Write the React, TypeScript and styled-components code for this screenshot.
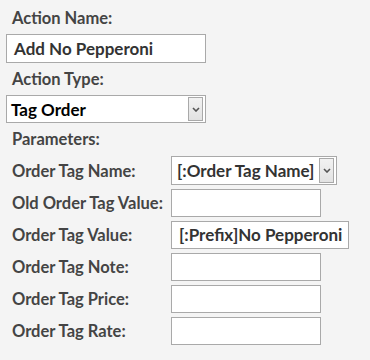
import { createGlobalStyle, styled } from 'styled-components';

const GlobalStyle = createGlobalStyle`
  body {
    margin: 0;
    background: #f4f4f4;
    font-family: Lato, 'Open Sans', sans-serif;
  }
`;

const params = [
  { name: 'Order Tag Name:', kind: 'select', value: '[:Order Tag Name]' },
  { name: 'Old Order Tag Value:', kind: 'input', value: '' },
  { name: 'Order Tag Value:', kind: 'wide', value: '[:Prefix]No Pepperoni' },
  { name: 'Order Tag Note:', kind: 'input', value: '' },
  { name: 'Order Tag Price:', kind: 'input', value: '' },
  { name: 'Order Tag Rate:', kind: 'input', value: '' }
];

export default function App() {
  return (
    <StyledPage>
      <GlobalStyle />
      <StyledLabel>Action Name:</StyledLabel>
      <StyledInput $width={200} $height={29}>Add No Pepperoni</StyledInput>
      <StyledLabel>Action Type:</StyledLabel>
      <Select width={200} height={28} value="Tag Order" dark />
      <StyledLabel $gap={7}>Parameters:</StyledLabel>
      <StyledGrid>
        {params.map(({ name, kind, value }) => (
          <StyledRow key={name}>
            <StyledRowLabel>{name}</StyledRowLabel>
            {kind === 'select' && <Select width={166} height={29} value={value} />}
            {kind === 'input' && <StyledInput $width={150} $height={28}>{value}</StyledInput>}
            {kind === 'wide' && <StyledInput $width={178} $height={28}>{value}</StyledInput>}
          </StyledRow>
        ))}
      </StyledGrid>
    </StyledPage>
  );
}

function Select({
  width,
  height,
  value,
  dark
}: {
  width: number;
  height: number;
  value: string;
  dark?: boolean;
}) {
  return (
    <StyledSelect $width={width} $height={height} $dark={dark}>
      <StyledSelectText $dark={dark}>{value}</StyledSelectText>
      <StyledDrop>
        <svg width="8" height="5" viewBox="0 0 8 5">
          <path d="M1 1 L4 4 L7 1" fill="none" stroke="#555" strokeWidth="1.6" />
        </svg>
      </StyledDrop>
    </StyledSelect>
  );
}

const StyledPage = styled.div`
  padding: 8px 6px;
`;

const StyledLabel = styled.div<{ $gap?: number }>`
  padding: 0 6px;
  font-size: 16.5px;
  font-weight: bold;
  color: #444;
  line-height: 20px;
  margin-bottom: ${(props) => props.$gap ?? 6}px;
`;

const StyledInput = styled.div<{ $width: number; $height: number }>`
  box-sizing: border-box;
  width: ${(props) => props.$width}px;
  height: ${(props) => props.$height}px;
  border: 1px solid #a9a9a9;
  background: #fff;
  padding: 0 6px 0 7px;
  font-size: 17px;
  font-weight: bold;
  color: #333;
  line-height: ${(props) => props.$height - 2}px;
  white-space: nowrap;
  margin-bottom: 6px;
`;

const StyledSelect = styled.div<{ $width: number; $height: number; $dark?: boolean }>`
  box-sizing: border-box;
  width: ${(props) => props.$width}px;
  height: ${(props) => props.$height}px;
  border: 1px solid #a9a9a9;
  background: #fff;
  display: flex;
  align-items: center;
  padding: 1px 2px 1px ${(props) => (props.$dark ? 4 : 5)}px;
  margin-bottom: 6px;
`;

const StyledSelectText = styled.div<{ $dark?: boolean }>`
  flex: 1;
  font-size: 17px;
  font-weight: bold;
  color: ${(props) => (props.$dark ? '#000' : '#333')};
  white-space: nowrap;
`;

const StyledDrop = styled.div`
  box-sizing: border-box;
  width: 15px;
  height: 100%;
  border: 1px solid #a9a9a9;
  background: linear-gradient(#f2f2f2, #e2e2e2);
  display: flex;
  align-items: center;
  justify-content: center;
`;

const StyledGrid = styled.div`
  display: flex;
  flex-direction: column;
  gap: 4px;
`;

const StyledRow = styled.div`
  display: grid;
  grid-template-columns: 165px auto;
  align-items: center;
  > div:last-child {
    margin-bottom: 0;
  }
`;

const StyledRowLabel = styled.div`
  padding-left: 6px;
  font-size: 16.5px;
  font-weight: bold;
  color: #444;
  white-space: nowrap;
`;
